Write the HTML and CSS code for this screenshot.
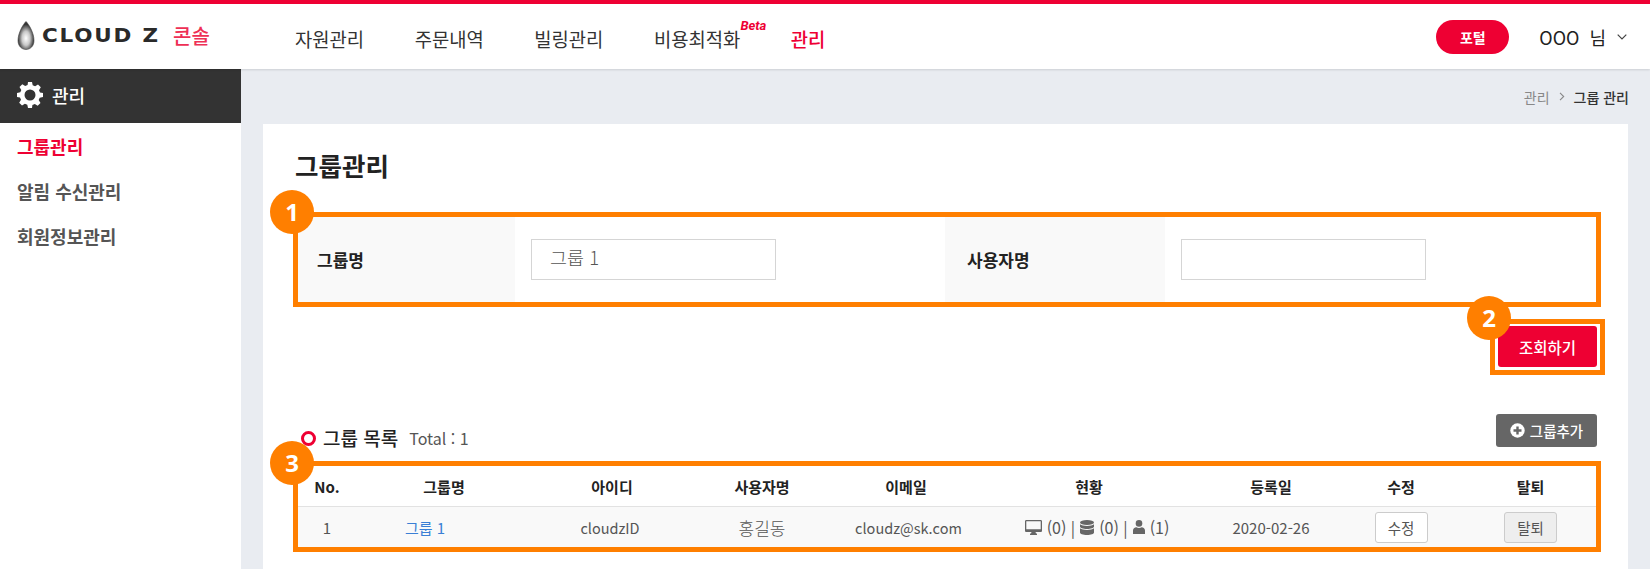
FILE: index.html
```html
<!DOCTYPE html>
<html lang="ko">
<head>
<meta charset="utf-8">
<title>그룹관리</title>
<link rel="stylesheet" href="styles.css">
</head>
<body>
<header class="topbar">
  <div class="logo">
    <svg class="logo-drop" width="18" height="29" viewBox="0 0 18 29">
      <defs><radialGradient id="dg" cx="50%" cy="60%" r="50%"><stop offset="0" stop-color="#fff"/><stop offset=".5" stop-color="#c8c8c8"/><stop offset="1" stop-color="#333"/></radialGradient></defs>
      <path d="M9 .5C6 3.500 1 12 1 19.500c0 5.500 3.600 9 8 9s8-3.500 8-9C17 12 12 3.500 9 .5z" fill="url(#dg)" stroke="#444" stroke-width=".6"/>
    </svg>
    <span class="logo-word">CLOUD Z</span>
    <span class="logo-sub">콘솔</span>
  </div>
  <nav class="nav">
    <a class="nav-item">자원관리</a>
    <a class="nav-item">주문내역</a>
    <a class="nav-item">빌링관리</a>
    <a class="nav-item nav-beta">비용최적화<em class="beta">Beta</em></a>
    <a class="nav-item nav-active">관리</a>
  </nav>
  <div class="user-area">
    <a class="portal">포털</a>
    <span class="user-name">OOO&nbsp; 님</span>
    <svg class="user-chevron" width="10" height="6" viewBox="0 0 10 6"><path d="M.7.7 5 5 9.300.7" fill="none" stroke="#444" stroke-width="1.200"/></svg>
  </div>
</header>
<div class="layout">
  <aside class="sidebar">
    <div class="side-head">
      <svg width="26" height="26" viewBox="0 0 26 26"><path fill="#fff" fill-rule="evenodd" d="M11 0h4l.7 3.300 2.400 1 2.900-1.800 2.800 2.800-1.800 2.900 1 2.400L26 11v4l-3.300.7-1 2.400 1.800 2.900-2.800 2.800-2.900-1.800-2.400 1L15 26h-4l-.7-3.300-2.400-1-2.900 1.800-2.800-2.800 1.800-2.900-1-2.400L0 15v-4l3.300-.7 1-2.400-1.800-2.900 2.800-2.800 2.900 1.800 2.400-1zM13 7.500a5.500 5.500 0 1 0 0 11 5.500 5.500 0 0 0 0-11z"/></svg>
      <span>관리</span>
    </div>
    <ul class="side-menu">
      <li class="side-item side-active">그룹관리</li>
      <li class="side-item">알림 수신관리</li>
      <li class="side-item">회원정보관리</li>
    </ul>
  </aside>
  <main class="main">
    <div class="crumbs">
      <span class="crumb">관리</span>
      <svg width="6" height="9" viewBox="0 0 6 9"><path d="M1 .8 4.700 4.500 1 8.200" fill="none" stroke="#888" stroke-width="1.100"/></svg>
      <span class="crumb-now">그룹 관리</span>
    </div>
    <section class="card">
      <h1 class="page-title">그룹관리</h1>
      <div class="search">
        <label class="search-label">그룹명</label>
        <div class="search-field"><input class="text-input" value="그룹 1"></div>
        <label class="search-label search-label-2">사용자명</label>
        <div class="search-field"><input class="text-input" value=""></div>
        <span class="mark mark-search"></span>
        <span class="num num-1">1</span>
      </div>
      <div class="actions">
        <button class="btn-primary">조회하기</button>
        <span class="mark mark-btn"></span>
        <span class="num num-2">2</span>
      </div>
      <div class="list-head">
        <div class="list-title">
          <span class="ring"></span>
          <strong>그룹 목록</strong>
          <span class="total">Total : 1</span>
        </div>
        <button class="btn-add">
          <svg width="15" height="15" viewBox="0 0 15 15"><circle cx="7.500" cy="7.500" r="7.200" fill="#fff"/><path d="M7.500 3.500v8M3.500 7.500h8" stroke="#666" stroke-width="2.400"/></svg>
          그룹추가
        </button>
      </div>
      <div class="grid-wrap">
        <div class="grid grid-head">
          <div class="cell cell-no">No.</div><div class="cell">그룹명</div><div class="cell">아이디</div><div class="cell">사용자명</div><div class="cell">이메일</div><div class="cell">현황</div><div class="cell">등록일</div><div class="cell">수정</div><div class="cell">탈퇴</div>
        </div>
        <div class="grid grid-row">
          <div class="cell cell-no">1</div>
          <div class="cell cell-link"><a class="link">그룹 1</a></div>
          <div class="cell cell-small cell-id">cloudzID</div>
          <div class="cell cell-name">홍길동</div>
          <div class="cell cell-small cell-email">cloudz@sk.com</div>
          <div class="cell cell-status">
            <svg width="17" height="15" viewBox="0 0 17 15"><path fill="#666" fill-rule="evenodd" d="M1.300 0h14.400C16.400 0 17 .6 17 1.300v9.400c0 .7-.6 1.300-1.300 1.300H10.500l.5 1.500h1V15H5v-1.500h1l.5-1.500H1.300C.6 12 0 11.400 0 10.700V1.300C0 .6.600 0 1.300 0zM1.300 1.300v8h14.400v-8z"/></svg>
            <span>(0) |</span>
            <svg width="14" height="15" viewBox="0 0 14 15"><ellipse cx="7" cy="2.500" rx="7" ry="2.500" fill="#666"/><path fill="#666" d="M0 4.300C1.500 5.600 4 6 7 6s5.500-.4 7-1.700v2.200C14 8 11 9 7 9S0 8 0 6.500zM0 8.300C1.500 9.600 4 10 7 10s5.500-.4 7-1.700v4.200C14 14 11 15 7 15s-7-1-7-2.500z"/></svg>
            <span>(0) |</span>
            <svg width="12" height="14" viewBox="0 0 12 14"><circle cx="6" cy="3.400" r="3.300" fill="#666"/><path fill="#666" d="M0 14v-3.500C0 8.500 1.500 7.300 3.400 7.200 4 7.800 5 8 6 8s2-.2 2.600-.8C10.500 7.300 12 8.500 12 10.500V14z"/></svg>
            <span>(1)</span>
          </div>
          <div class="cell">2020-02-26</div>
          <div class="cell"><button class="btn-mini">수정</button></div>
          <div class="cell"><button class="btn-mini btn-mini-off">탈퇴</button></div>
        </div>
        <span class="mark mark-grid"></span>
        <span class="num num-3">3</span>
      </div>
    </section>
  </main>
</div>
</body>
</html>
```
FILE: styles.css
```css
* { box-sizing: border-box; }
html, body { margin: 0; height: 569px; overflow: hidden; }
body {
  font-family: "Noto Sans CJK KR", "Noto Sans", sans-serif;
  color: #333;
  background: #e9ecf1;
}
.topbar {
  height: 69px;
  border-top: 4px solid #ee0033;
  background: #fff;
  display: flex;
  align-items: center;
  box-shadow: 0 1px 2px rgba(0,0,0,.12);
  position: relative;
}
.logo { width: 295px; padding-left: 17px; display: flex; align-items: center; height: 100%; }
.logo-drop { margin-top: -3px; }
.logo-word {
  font-family: "DejaVu Sans", sans-serif;
  font-weight: 700;
  font-size: 19px;
  letter-spacing: 1.600px;
  margin-left: 7px;
  color: #2a2a2a;
  white-space: nowrap;
  width: 130px;
  margin-top: -3px;
  transform: scaleX(1.13);
  transform-origin: left center;
}
.logo-sub { font-size: 20px; line-height: 1; color: #ee2f55; font-weight: 500; margin-top: -2px; margin-left: 1px; }
.nav { display: flex; gap: 50.500px; font-size: 18.800px; line-height: 26px; margin-top: 4px; }
.nav-item { color: #333; white-space: nowrap; }
.nav-active { color: #ee0033; font-weight: 500; }
.nav-beta { position: relative; }
.beta {
  position: absolute;
  right: -26px;
  top: -8px;
  font: italic 700 13px/16px "Roboto", sans-serif;
  color: #ee0033;
}
.user-area { margin-left: auto; display: flex; align-items: center; padding-right: 23px; }
.portal {
  width: 73px;
  height: 34px;
  border-radius: 17px;
  background: #ee0033;
  color: #fff;
  font-weight: 700;
  font-size: 14px;
  display: flex;
  align-items: center;
  justify-content: center;
  margin-right: 30px;
}
.user-name { font-size: 18px; color: #222; margin-right: 11px; }
.layout { display: flex; height: 500px; }
.sidebar { width: 241px; background: #fff; }
.side-head {
  height: 54px;
  background: #333;
  color: #fff;
  display: flex;
  align-items: center;
  gap: 9px;
  padding: 0 0 3px 17px;
  font-size: 18px;
  font-weight: 500;
}
.side-menu { list-style: none; margin: 0; padding: 1px 0 0 17px; }
.side-item { height: 45px; line-height: 45px; font-size: 18px; font-weight: 700; color: #555; }
.side-active { color: #ee0033; }
.main { flex: 1; padding: 0 22px 0 22px; min-width: 0; }
.crumbs {
  height: 55px;
  display: flex;
  align-items: center;
  justify-content: flex-end;
  gap: 9px;
  font-size: 14px;
  margin-right: -1px;
}
.crumb { color: #888; }
.crumb-now { color: #333; font-weight: 500; }
.card { background: #fff; height: 445px; padding: 27px 31px 0 32px; }
.page-title { margin: 0; font-size: 25.500px; line-height: 28px; font-weight: 700; color: #222; }
.search {
  margin-top: 38px;
  height: 85px;
  display: grid;
  grid-template-columns: 220px 430px 220px 1fr;
  position: relative;
}
.search-label {
  background: #f9f9f9;
  font-size: 17px;
  font-weight: 700;
  color: #222;
  display: flex;
  align-items: center;
  padding-left: 22px;
}
.search-field { display: flex; align-items: center; padding-left: 16px; }
.text-input {
  width: 245px;
  height: 41px;
  border: 1px solid #d5d5d5;
  padding: 0 18px 5px;
  font: 300 18.500px "Noto Sans CJK KR", sans-serif;
  color: #555;
  background: #fff;
  outline: none;
}
.actions { display: flex; justify-content: flex-end; margin-top: 24px; position: relative; }
.btn-primary {
  width: 99px;
  height: 41px;
  background: #ee0033;
  border: 0;
  border-radius: 3px;
  color: #fff;
  font: 500 15.500px "Noto Sans CJK KR", sans-serif;
  padding: 0;
}
.list-head { display: flex; justify-content: space-between; margin-top: 47px; height: 36px; }
.list-title { align-self: flex-end; display: flex; align-items: center; line-height: 24px; padding-left: 6px; }
.list-title strong { font-size: 19px; font-weight: 500; color: #222; margin-left: 7px; }
.ring { width: 15px; height: 15px; border-radius: 50%; border: 3.500px solid #ee0033; background: #fff; }
.total { font-size: 16px; color: #555; margin-left: 11px; }
.btn-add {
  width: 101px;
  height: 33px;
  background: #666;
  border: 0;
  border-radius: 3px;
  color: #fff;
  font: 500 14.500px "Noto Sans CJK KR", sans-serif;
  display: flex;
  align-items: center;
  justify-content: center;
  gap: 5px;
  padding: 0;
}
.grid-wrap { margin-top: 16px; position: relative; }
.grid {
  display: grid;
  grid-template-columns: 55px 188px 148px 152px 136px 230px 134px 126px 133px;
  align-items: center;
  text-align: center;
  font-size: 15px;
}
.grid-head { height: 41px; font-weight: 700; color: #222; border-bottom: 1px solid #e2e2e2; }
.grid-row { height: 40px; background: #f9f9f9; color: #555; }
.cell-no { padding-left: 9px; }
.cell-link { text-align: left; padding-left: 55px; }
.cell-small { font-size: 14.500px; }
.cell-id { padding-right: 4px; }
.cell-email { padding-left: 5px; }
.cell-name { font-size: 17px; font-weight: 300; }
.link { color: #3a7fd5; }
.cell-status { display: flex; align-items: center; justify-content: center; gap: 5px; font-size: 16px; padding-left: 16px; }
.btn-mini {
  width: 53px;
  height: 31px;
  border: 1px solid #ccc;
  border-radius: 3px;
  background: #fff;
  color: #555;
  font: 400 14.500px "Noto Sans CJK KR", sans-serif;
  padding: 0;
}
.btn-mini-off { background: #eee; }
.mark { position: absolute; border: 5px solid #ff7f00; pointer-events: none; }
.mark-search { left: -2px; right: -4px; top: -5px; bottom: -5px; }
.mark-btn { right: -8px; top: -7px; width: 115px; height: 56px; }
.mark-grid { left: -2px; right: -4px; top: -5px; bottom: -5px; }
.num {
  position: absolute;
  width: 44px;
  height: 44px;
  border-radius: 50%;
  background: #ff7f00;
  color: #fff;
  font: 700 24px/44px "Noto Sans", sans-serif;
  text-align: center;
}
.num-1 { left: -25px; top: -27px; }
.num-2 { right: 86px; top: -30px; }
.num-3 { left: -25px; top: -25px; }
```
